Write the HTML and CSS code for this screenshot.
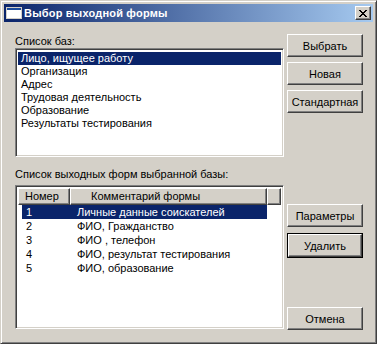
FILE: index.html
```html
<!DOCTYPE html>
<html lang="ru">
<head>
  <meta charset="UTF-8">
  <title>Выбор выходной формы</title>
  <link rel="stylesheet" href="styles.css">
</head>
<body>

  <div class="window">
    <div class="titlebar">
      <svg class="title-icon" width="16" height="16" viewBox="0 0 16 16">
        <rect x="0" y="2" width="16" height="12" fill="#D4D0C8"/>
        <rect x="1" y="3" width="14" height="10" fill="#fff"/>
        <rect x="1" y="3" width="14" height="2" fill="#1C4C9C"/>
      </svg>
      <span class="title-text">Выбор выходной формы</span>
      <button class="close-btn raised">
        <svg width="8" height="7" viewBox="0 0 8 7" shape-rendering="crispEdges">
          <path d="M0 0h2v1h-2z M6 0h2v1h-2z M1 1h2v1h-2z M5 1h2v1h-2z M2 2h4v1h-4z M3 3h2v1h-2z M2 4h4v1h-4z M1 5h2v1h-2z M5 5h2v1h-2z M0 6h2v1h-2z M6 6h2v1h-2z" fill="#000"/>
        </svg>
      </button>
    </div>

    <div class="client">
      <div class="section section-bases">
        <div class="col-main">
          <div class="label label-bases">Список баз:</div>
          <div class="listbox sunken">
            <div class="item selected">Лицо, ищущее работу</div>
            <div class="item">Организация</div>
            <div class="item">Адрес</div>
            <div class="item">Трудовая деятельность</div>
            <div class="item">Образование</div>
            <div class="item">Результаты тестирования</div>
          </div>
        </div>
        <div class="col-buttons">
          <button class="btn raised">Выбрать</button>
          <button class="btn raised">Новая</button>
          <button class="btn raised">Стандартная</button>
        </div>
      </div>

      <div class="section section-forms">
        <div class="col-main">
          <div class="label label-forms">Список выходных форм выбранной базы:</div>
          <div class="listview sunken">
            <div class="lv-header">
              <div class="hcell hcell-num raised">Номер</div>
              <div class="hcell hcell-comment raised">Комментарий формы</div>
              <div class="hcell hcell-rest raised"></div>
            </div>
            <div class="lv-row selected"><span class="c-num">1</span><span class="c-comment">Личные данные соискателей</span></div>
            <div class="lv-row"><span class="c-num">2</span><span class="c-comment">ФИО, Гражданство</span></div>
            <div class="lv-row"><span class="c-num">3</span><span class="c-comment">ФИО , телефон</span></div>
            <div class="lv-row"><span class="c-num">4</span><span class="c-comment">ФИО, результат тестирования</span></div>
            <div class="lv-row"><span class="c-num">5</span><span class="c-comment">ФИО, образование</span></div>
          </div>
        </div>
        <div class="col-buttons col-buttons-forms">
          <button class="btn raised btn-params">Параметры</button>
          <div class="default-frame"><button class="btn raised">Удалить</button></div>
          <button class="btn raised btn-cancel">Отмена</button>
        </div>
      </div>
    </div>
  </div>

</body>
</html>
```

FILE: styles.css
```css
* {
  box-sizing: border-box;
}

body {
  margin: 0;
  background: #D4D0C8;
  font-family: "Liberation Sans", Arial, sans-serif;
  font-size: 11px;
  color: #000;
}

.window {
  width: 377px;
  height: 344px;
  padding: 3px;
  background: #D4D0C8;
  border: 1px solid;
  border-color: #D4D0C8 #404040 #404040 #D4D0C8;
  box-shadow: inset 1px 1px #fff, inset -1px -1px #808080;
  display: flex;
  flex-direction: column;
}

/* 3d edges */
.raised {
  background: #D4D0C8;
  border: 1px solid;
  border-color: #fff #404040 #404040 #fff;
  box-shadow: inset -1px -1px #808080;
}

.sunken {
  background: #fff;
  border: 1px solid;
  border-color: #808080 #fff #fff #808080;
  box-shadow: inset 1px 1px #404040, inset -1px -1px #D4D0C8;
}

.titlebar {
  height: 18px;
  display: flex;
  align-items: center;
  background: linear-gradient(to right, #0A246A, #A6CAF0);
  color: #fff;
  font-weight: bold;
}

.title-icon {
  margin-left: 2px;
  flex-shrink: 0;
}

.title-text {
  margin-left: 2px;
  letter-spacing: 0.2px;
}

.close-btn {
  margin-left: auto;
  margin-right: 2px;
  width: 16px;
  height: 14px;
  padding: 0;
  display: flex;
  align-items: center;
  justify-content: center;
}

.client {
  flex: 1;
  padding: 12px 0 0 11px;
  display: flex;
  flex-direction: column;
}

.section {
  display: flex;
}

.col-main {
  width: 269px;
  display: flex;
  flex-direction: column;
}

.label {
  line-height: 13px;
}

.label-bases {
  margin-top: 1px;
}

.section-forms {
  flex: 1;
  margin-top: 11px;
}

.label-forms {
  margin-bottom: 4px;
}

.listbox {
  height: 109px;
  padding: 3px 2px 2px 2px;
}

.item {
  line-height: 13px;
  height: 13px;
  padding-left: 3px;
  white-space: nowrap;
}

.item.selected {
  background: #0A246A;
  color: #fff;
}

.col-buttons {
  margin-left: 3px;
  width: 76px;
  display: flex;
  flex-direction: column;
  gap: 5px;
}

.btn {
  width: 76px;
  height: 23px;
  padding: 0;
  font: inherit;
  color: #000;
}

.col-buttons-forms {
  gap: 0;
}

.btn-params {
  margin-top: 36px;
}

.default-frame {
  margin-top: 6px;
  width: 76px;
  border: 1px solid #000;
}

.default-frame .btn {
  width: 74px;
  display: block;
}

.btn-cancel {
  margin-top: auto;
  margin-bottom: 10px;
}

.listview {
  height: 144px;
  padding: 2px;
  overflow: hidden;
}

.lv-header {
  display: flex;
  height: 17px;
}

.hcell {
  height: 17px;
  line-height: 15px;
  white-space: nowrap;
}

.hcell-num {
  width: 52px;
  padding-left: 6px;
}

.hcell-comment {
  width: 197px;
  padding-left: 20px;
}

.hcell-rest {
  flex: 1;
}

.lv-row {
  display: flex;
  height: 14px;
  line-height: 14px;
  margin-left: 4px;
  width: 245px;
  white-space: nowrap;
}

.lv-row:first-of-type {
  margin-top: 1px;
}

.lv-row.selected {
  background: #0A246A;
  color: #fff;
}

.c-num {
  width: 48px;
  padding-left: 4px;
}

.c-comment {
  padding-left: 7px;
}
```
